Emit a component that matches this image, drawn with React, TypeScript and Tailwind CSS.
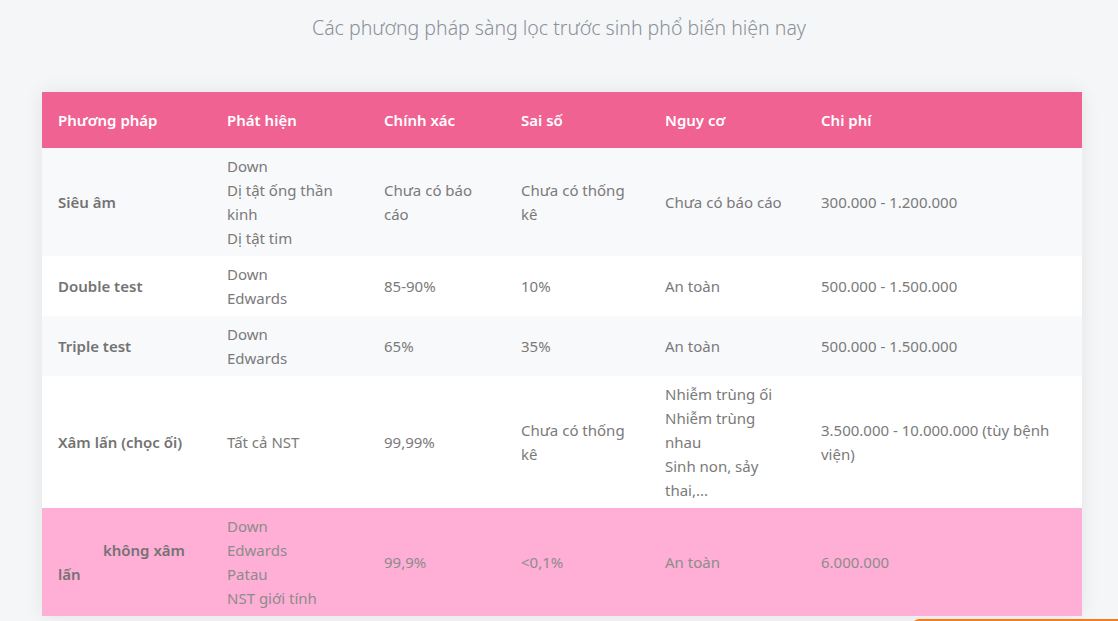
import React from 'react'

type Row = {
  name: React.ReactNode
  detect: string[]
  accuracy: string
  error: string
  risk: string[]
  cost: string
  highlight?: boolean
}

const ROWS: Row[] = [
  {
    name: 'Siêu âm',
    detect: ['Down', 'Dị tật ống thần kinh', 'Dị tật tim'],
    accuracy: 'Chưa có báo cáo',
    error: 'Chưa có thống kê',
    risk: ['Chưa có báo cáo'],
    cost: '300.000 - 1.200.000',
  },
  {
    name: 'Double test',
    detect: ['Down', 'Edwards'],
    accuracy: '85-90%',
    error: '10%',
    risk: ['An toàn'],
    cost: '500.000 - 1.500.000',
  },
  {
    name: 'Triple test',
    detect: ['Down', 'Edwards'],
    accuracy: '65%',
    error: '35%',
    risk: ['An toàn'],
    cost: '500.000 - 1.500.000',
  },
  {
    name: 'Xâm lấn (chọc ối)',
    detect: ['Tất cả NST'],
    accuracy: '99,99%',
    error: 'Chưa có thống kê',
    risk: ['Nhiễm trùng ối', 'Nhiễm trùng nhau', 'Sinh non, sảy thai,...'],
    cost: '3.500.000 - 10.000.000 (tùy bệnh viện)',
  },
  {
    name: (
      <>
        <span className="inline-block w-[41px]" /> không xâm lấn
      </>
    ),
    detect: ['Down', 'Edwards', 'Patau', 'NST giới tính'],
    accuracy: '99,9%',
    error: '<0,1%',
    risk: ['An toàn'],
    cost: '6.000.000',
    highlight: true,
  },
]

const HEADERS = ['Phương pháp', 'Phát hiện', 'Chính xác', 'Sai số', 'Nguy cơ', 'Chi phí']
const WIDTHS = ['w-[169px]', 'w-[157px]', 'w-[137px]', 'w-[144px]', 'w-[156px]', 'w-[277px]']

export default function App() {
  return (
    <div className="min-h-[621px] bg-[#f5f6f8] font-['Noto_Sans',sans-serif] text-[15px] leading-6 text-[#7a7a7a]">
      {/* Title */}
      <h2 className="pt-[14px] text-center text-[19.5px] leading-7 font-light text-[#8a9099]">
        Các phương pháp sàng lọc trước sinh phổ biến hiện nay
      </h2>

      <div className="mt-[50px] ml-[42px] w-[1040px] shadow-[0_0_18px_rgba(0,0,0,0.08)]">
        <table className="w-full table-fixed border-collapse">
          <thead>
            <tr className="bg-[#f06292] text-white">
              {HEADERS.map((h, i) => (
                <th key={h} className={`${WIDTHS[i]} px-4 py-4 text-left font-semibold`}>
                  {h}
                </th>
              ))}
            </tr>
          </thead>
          <tbody>
            {ROWS.map((r, i) => (
              <tr
                key={i}
                className={r.highlight ? 'bg-[#ffaed6] text-[#8c8c8c]' : i % 2 === 0 ? 'bg-[#f8f9fb]' : 'bg-white'}
              >
                <td className="px-4 py-1.5 align-middle font-semibold text-[#737373]">{r.name}</td>
                <td className="px-4 py-1.5 align-middle">
                  {r.detect.map((d) => (
                    <div key={d}>{d}</div>
                  ))}
                </td>
                <td className="px-4 py-1.5 align-middle">{r.accuracy}</td>
                <td className="px-4 py-1.5 align-middle">{r.error}</td>
                <td className="px-4 py-1.5 align-middle">
                  {r.risk.map((d) => (
                    <div key={d}>{d}</div>
                  ))}
                </td>
                <td className="px-4 py-1.5 align-middle">{r.cost}</td>
              </tr>
            ))}
          </tbody>
        </table>
      </div>

      {/* floating button peeking at bottom edge */}
      <div className="fixed left-[913px] top-[619px] h-[30px] w-[220px] rounded-t-[6px] bg-[#f47b20]" />
    </div>
  )
}
